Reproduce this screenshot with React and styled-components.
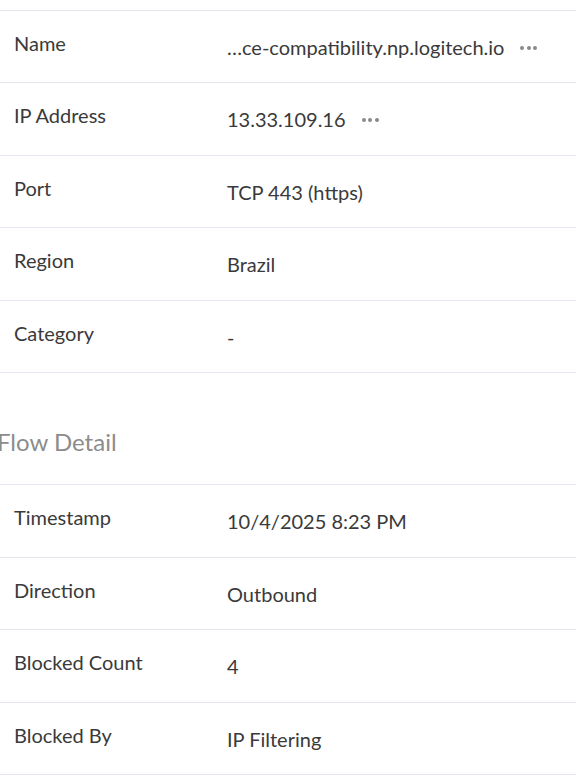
import React from "react";
import styled, { createGlobalStyle } from "styled-components";

const GlobalStyle = createGlobalStyle`
  html, body {
    margin: 0;
    padding: 0;
    background: #ffffff;
    font-family: Lato, "Open Sans", sans-serif;
    color: #333333;
    overflow: hidden;
  }
`;

const Page = styled.div`
  width: 576px;
  padding-top: 9.5px;
`;

const Table = styled.div`
  border-top: 1px solid #e6e6ef;
`;

const Row = styled.div`
  display: grid;
  grid-template-columns: 213px 1fr;
  align-items: center;
  height: 72.5px;
  box-sizing: border-box;
  border-bottom: 1px solid #e6e6ef;
  padding-left: 14px;
`;

const Label = styled.div`
  font-size: 20px;
  color: #3a3a3a;
  padding-bottom: 7px;
  white-space: nowrap;
`;

const Value = styled.div`
  display: flex;
  align-items: center;
  gap: 16px;
  font-size: 20px;
  color: #3a3a3a;
  padding-top: 1px;
  white-space: nowrap;
`;

const Dots = styled.span`
  display: inline-flex;
  gap: 2.5px;
  padding-top: 2px;

  i {
    width: 4px;
    height: 4px;
    border-radius: 50%;
    background: #8a8a8a;
  }
`;

const SectionTitle = styled.h2`
  margin: 0;
  height: 112px;
  box-sizing: border-box;
  padding-top: 54px;
  text-indent: -3px;
  font-size: 24px;
  font-weight: 400;
  color: #8c8c8c;
  line-height: 30px;
  border-bottom: 1px solid #e6e6ef;
  white-space: nowrap;
`;

const More = () => (
  <Dots>
    <i />
    <i />
    <i />
  </Dots>
);

const endpoint = [
  { label: "Name", value: "…ce-compatibility.np.logitech.io", more: true },
  { label: "IP Address", value: "13.33.109.16", more: true },
  { label: "Port", value: "TCP 443 (https)" },
  { label: "Region", value: "Brazil" },
  { label: "Category", value: "-" },
];

const flow = [
  { label: "Timestamp", value: "10/4/2025 8:23 PM" },
  { label: "Direction", value: "Outbound" },
  { label: "Blocked Count", value: "4" },
  { label: "Blocked By", value: "IP Filtering" },
];

const renderRows = (rows) =>
  rows.map((r) => (
    <Row key={r.label}>
      <Label>{r.label}</Label>
      <Value>
        {r.value}
        {r.more && <More />}
      </Value>
    </Row>
  ));

export default function App() {
  return (
    <Page>
      <GlobalStyle />
      <Table>{renderRows(endpoint)}</Table>
      <SectionTitle>Flow Detail</SectionTitle>
      <div>{renderRows(flow)}</div>
    </Page>
  );
}
